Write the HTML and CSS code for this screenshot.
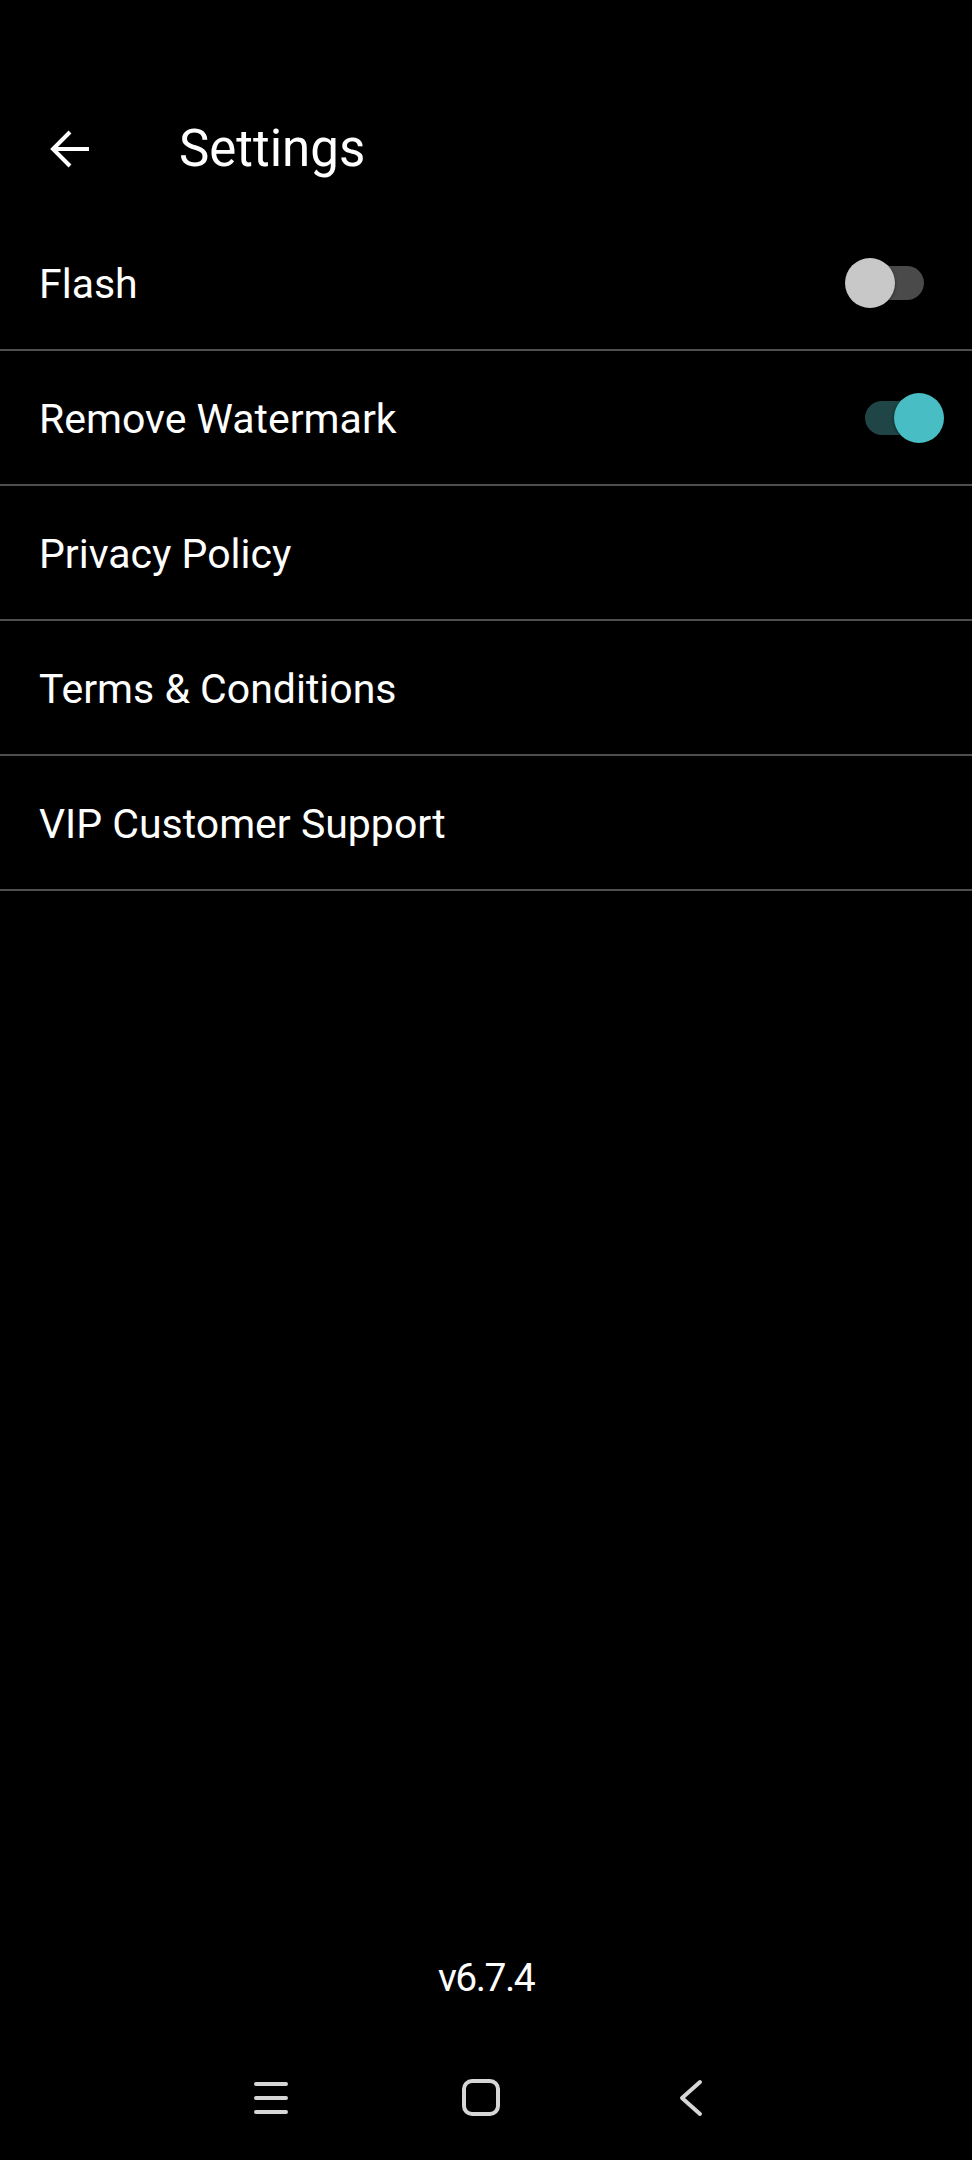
FILE: index.html
```html
<!DOCTYPE html>
<html lang="en">
<head>
    <meta charset="UTF-8">
    <meta name="viewport" content="width=device-width, initial-scale=1.0">
    <title>Settings</title>
    <link rel="stylesheet" href="styles.css">
</head>
<body>
    <div class="app">
        <div class="status-bar"></div>

        <div class="toolbar">
            <div class="back-button">
                <svg width="40" height="40" viewBox="0 0 40 40">
                    <path d="M3 20H39M20 3L3 20L20 37" fill="none" stroke="#fff" stroke-width="4"/>
                </svg>
            </div>
            <div class="title">Settings</div>
        </div>

        <div class="settings-list">
            <div class="setting-row">
                <span class="setting-label">Flash</span>
                <div class="switch"></div>
            </div>
            <div class="setting-row">
                <span class="setting-label">Remove Watermark</span>
                <div class="switch on"></div>
            </div>
            <div class="setting-row">
                <span class="setting-label">Privacy Policy</span>
            </div>
            <div class="setting-row">
                <span class="setting-label">Terms &amp; Conditions</span>
            </div>
            <div class="setting-row">
                <span class="setting-label">VIP Customer Support</span>
            </div>
        </div>

        <div class="version">v6.7.4</div>

        <div class="nav-bar">
            <div class="nav-item">
                <svg width="36" height="34" viewBox="0 0 36 34">
                    <path d="M3 3H33M3 17H33M3 31H33" stroke="#d6d6d6" stroke-width="4" stroke-linecap="round"/>
                </svg>
            </div>
            <div class="nav-item">
                <svg width="38" height="37" viewBox="0 0 38 37">
                    <rect x="2" y="2" width="34" height="33" rx="8" fill="none" stroke="#d6d6d6" stroke-width="4"/>
                </svg>
            </div>
            <div class="nav-item">
                <svg width="26" height="38" viewBox="0 0 26 38">
                    <path d="M22 3L4 19L22 35" fill="none" stroke="#d6d6d6" stroke-width="4" stroke-linecap="round" stroke-linejoin="round"/>
                </svg>
            </div>
        </div>
    </div>
</body>
</html>
```

FILE: styles.css
```css
body {
    margin: 0;
    background-color: #000;
    color: #fff;
    font-family: Roboto, "Noto Sans", sans-serif;
}

.app {
    min-height: 2160px;
    display: flex;
    flex-direction: column;
}

.status-bar {
    height: 81px;
}

.toolbar {
    height: 135px;
    display: flex;
    align-items: center;
    padding-left: 50px;
}

.back-button {
    width: 40px;
    height: 40px;
    margin-right: 89px;
}

.back-button svg {
    display: block;
}

.title {
    font-size: 51px;
    line-height: 1;
}

.setting-row {
    height: 133px;
    border-bottom: 2px solid #4e4e4e;
    display: flex;
    align-items: center;
    justify-content: space-between;
    padding: 0 48px 0 39px;
}

.setting-label {
    font-size: 41px;
    line-height: 1;
    padding-top: 4px;
}

/* toggle: track is the element, knob sits over it */
.switch {
    position: relative;
    width: 59px;
    height: 34px;
    border-radius: 17px;
    background-color: #4a4a4a;
}

.switch::after {
    content: "";
    position: absolute;
    top: -8px;
    left: -20px;
    width: 50px;
    height: 50px;
    border-radius: 50%;
    background-color: #c8c8c8;
    box-shadow: 0 1px 3px rgba(0,0,0,0.5);
}

.switch.on {
    background-color: #1f4547;
}

.switch.on::after {
    left: 29px;
    background-color: #48bec4;
}

.version {
    margin-top: auto;
    text-align: center;
    font-size: 39px;
    letter-spacing: -1.5px;
    line-height: 50px;
    padding-bottom: 32px;
}

.nav-bar {
    height: 125px;
    display: flex;
    justify-content: center;
    align-items: center;
    gap: 150px;
    padding-right: 10px;
}

.nav-item {
    width: 60px;
    display: flex;
    justify-content: center;
}

.nav-item svg {
    display: block;
}
```
